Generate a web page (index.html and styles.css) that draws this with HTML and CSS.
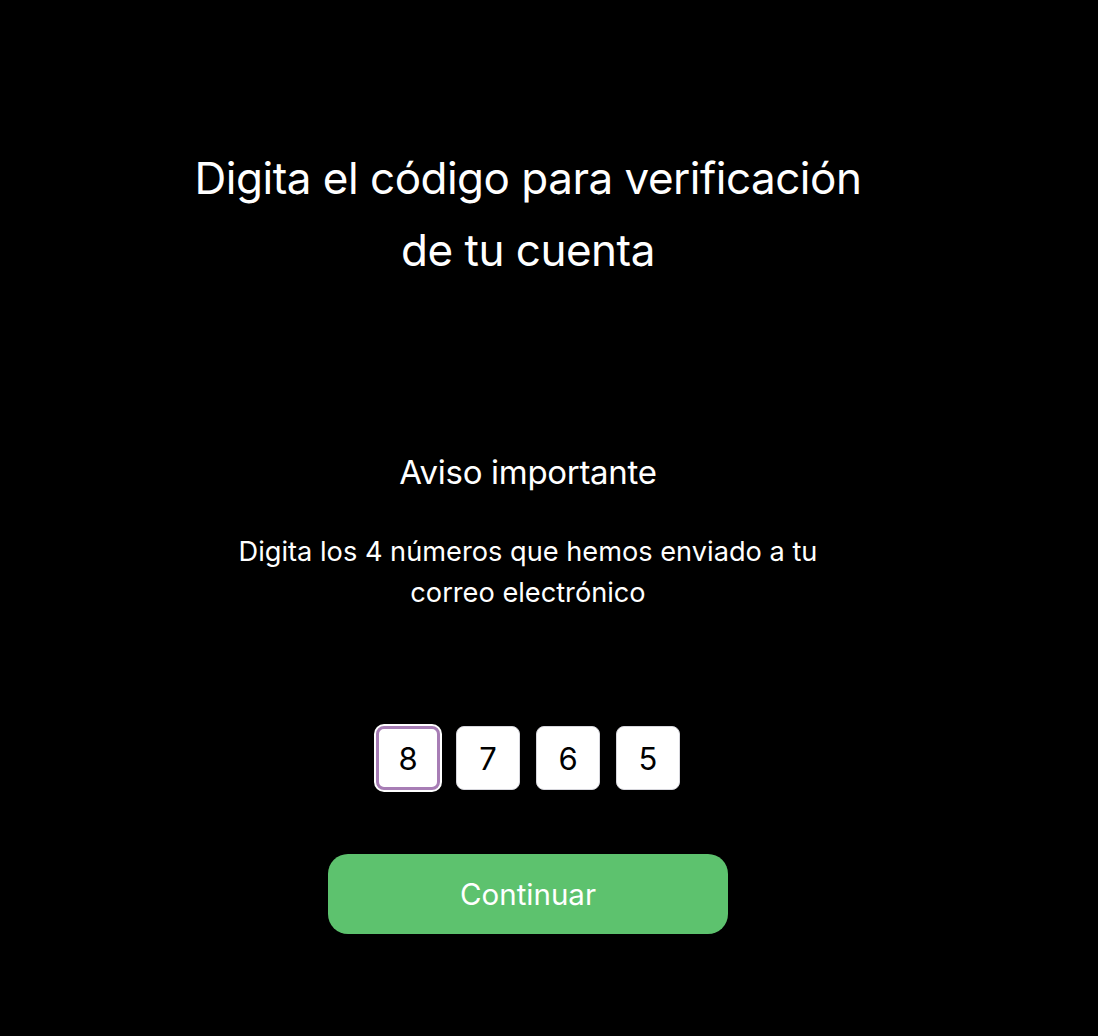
FILE: index.html
```html
<!DOCTYPE html>
<html lang="es">
<head>
<meta charset="utf-8">
<title>Verificación</title>
<link rel="stylesheet" href="styles.css">
</head>
<body>
<main class="page">
  <h1 class="title">Digita el código para verificación<br>de tu cuenta</h1>
  <section class="notice">
    <h2 class="notice-title">Aviso importante</h2>
    <p class="notice-text">Digita los 4 números que hemos enviado a tu<br>correo electrónico</p>
  </section>
  <div class="code">
    <div class="digit digit-active">8</div>
    <div class="digit">7</div>
    <div class="digit">6</div>
    <div class="digit">5</div>
  </div>
  <button class="btn" type="button">Continuar</button>
</main>
</body>
</html>
```
FILE: styles.css
```css
html, body {
  margin: 0;
  padding: 0;
  background: #000;
}
body {
  font-family: Inter, "Noto Sans", sans-serif;
  color: #fff;
}
.page {
  width: 1056px;
  display: flex;
  flex-direction: column;
  align-items: center;
  padding-top: 142px;
}
.title {
  margin: 0;
  font-size: 44px;
  font-weight: 400;
  line-height: 72px;
  text-align: center;
  letter-spacing: -0.5px;
}
.notice {
  margin-top: 166px;
  display: flex;
  flex-direction: column;
  align-items: center;
}
.notice-title {
  margin: 0;
  font-size: 33px;
  font-weight: 400;
  line-height: 40px;
  letter-spacing: -0.3px;
}
.notice-text {
  margin: 39px 0 0;
  font-size: 27.2px;
  line-height: 41px;
  text-align: center;
}
.code {
  margin-top: 113px;
  display: flex;
  gap: 16px;
}
.digit {
  width: 64px;
  height: 64px;
  box-sizing: border-box;
  border: 1px solid #d6d6dc;
  border-radius: 8px;
  background: #fff;
  color: #000;
  font-size: 31px;
  display: flex;
  align-items: center;
  justify-content: center;
}
.digit-active {
  border: 3px solid #a77db5;
  box-shadow: 0 0 0 2px #fff;
}
.btn {
  margin-top: 64px;
  width: 400px;
  height: 80px;
  border: 0;
  border-radius: 20px;
  background: #5dc26e;
  color: #fff;
  font-family: Inter, "Noto Sans", sans-serif;
  font-size: 29.5px;
}
```
